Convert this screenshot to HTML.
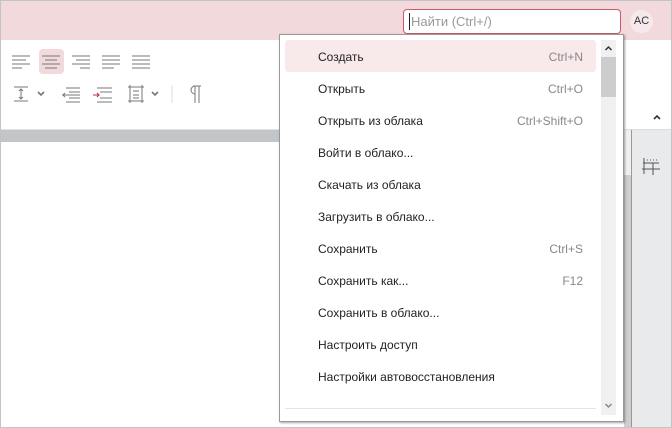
<!DOCTYPE html><html><head><meta charset="utf-8"><style>
*{box-sizing:border-box;margin:0;padding:0}
body{width:672px;height:428px;position:relative;overflow:hidden;background:#fff;font-family:"Liberation Sans","DejaVu Sans",sans-serif;font-size:12px;color:#222}
.a{position:absolute}
.win{position:absolute;left:0;top:0;width:672px;height:428px;border:1px solid #c4c4c4;pointer-events:none}
.row{position:absolute;left:285px;width:311px;height:32px;line-height:34px}
.row span{position:absolute;left:33px}
.row b{position:absolute;right:13px;font-weight:normal;color:#888}
</style></head><body>
<div class="a" style="left:0;top:0;width:672px;height:40px;background:#f2d9dc"></div>
<div class="a" style="left:403px;top:9px;width:218px;height:25px;border:1px solid #c95a66;border-radius:4px;background:#fff"></div>
<div class="a" style="left:409px;top:13px;width:1px;height:17px;background:#222"></div>
<div class="a" style="left:411px;top:14px;color:#999;font-size:13px">Найти (Ctrl+/)</div>
<div class="a" style="left:630px;top:10px;width:23px;height:23px;border-radius:50%;background:#f7e9eb;text-align:center;line-height:23px;font-size:11px;color:#333">AC</div>
<div class="a" style="left:39px;top:49px;width:25px;height:25px;background:#f2d9dc;border-radius:4px"></div>
<svg class="a" style="left:0;top:40px" width="280" height="90" stroke="#777" stroke-width="1" fill="none">
<path d="M12 16h18M12 20h14M12 24h18M12 28h10"/>
<path d="M42 16h18M45 20h12M42 24h18M45 28h12"/>
<path d="M72 16h18M76 20h14M72 24h18M80 28h10"/>
<path d="M102 16h18M102 20h18M102 24h18M102 28h12"/>
<path d="M132 16h18M132 20h18M132 24h18M132 28h18"/>
<path d="M14 47h14M14 61h14M21 49v10M19 51l2-2 2 2M19 57l2 2 2-2"/>
<path d="M38 52l3 3 3-3" stroke-width="1.6"/>
<path d="M66 48h14M69 52h11M62 55h18M69 58h11M66 62h14M65 53l-2 2 2 2"/>
<path d="M97 48h15M100 52h12M100 58h12M97 62h15"/><path d="M93 55h6M97 53l2 2-2 2" stroke="#c0283a"/>
<path d="M128 47h16M128 61h16M130 45v18M142 45v18M133 51h6M133 55h6M133 58h6"/>
<path d="M152 52l3 3 3-3" stroke-width="1.6"/>
<path d="M172 45v18" stroke="#ddd"/>
<path d="M193 46h8M195 46v17M199 46v17M195 46a4 4 0 0 0 0 8"/>
</svg>
<div class="a" style="left:0;top:129px;width:624px;height:13px;background:#c3c6c8;border-top:1px solid #e2e2e2"></div>
<svg class="a" style="left:652px;top:113px" width="10" height="8"><path d="M2 6l3-3 3 3" stroke="#333" stroke-width="1.6" fill="none"/></svg>
<div class="a" style="left:624px;top:129px;width:48px;height:1px;background:#ddd"></div>
<div class="a" style="left:624px;top:130px;width:7px;height:298px;background:#f0f0f0"></div>
<div class="a" style="left:624px;top:175px;width:7px;height:253px;background:#cfcfcf"></div>
<div class="a" style="left:631px;top:130px;width:1px;height:298px;background:#999"></div>
<div class="a" style="left:632px;top:130px;width:40px;height:298px;background:#e8eaec"></div>
<svg class="a" style="left:640px;top:155px" width="24" height="24" stroke="#555" fill="none"><path d="M4 3v16M3 8h16M2 14h18M13 8v12M7 5h1M10 5h1M13 5h1M16 5h1"/></svg>
<div class="a" style="left:279px;top:34px;width:345px;height:388px;background:#fff;border:1px solid #999;box-shadow:1px 1px 2px rgba(0,0,0,.35)"></div>
<div class="a" style="left:285px;top:40px;width:311px;height:32px;background:#f8e9eb;border-radius:3px"></div>
<div class="row" style="top:40px"><span>Создать</span><b>Ctrl+N</b></div>
<div class="row" style="top:72px"><span>Открыть</span><b>Ctrl+O</b></div>
<div class="row" style="top:104px"><span>Открыть из облака</span><b>Ctrl+Shift+O</b></div>
<div class="row" style="top:136px"><span>Войти в облако...</span></div>
<div class="row" style="top:168px"><span>Скачать из облака</span></div>
<div class="row" style="top:200px"><span>Загрузить в облако...</span></div>
<div class="row" style="top:232px"><span>Сохранить</span><b>Ctrl+S</b></div>
<div class="row" style="top:264px"><span>Сохранить как...</span><b>F12</b></div>
<div class="row" style="top:296px"><span>Сохранить в облако...</span></div>
<div class="row" style="top:328px"><span>Настроить доступ</span></div>
<div class="row" style="top:360px"><span>Настройки автовосстановления</span></div>
<div class="a" style="left:285px;top:408px;width:311px;height:1px;background:#e4e4e4"></div>
<div class="a" style="left:601px;top:40px;width:15px;height:375px;background:#f0f0f0"></div>
<div class="a" style="left:601px;top:57px;width:15px;height:40px;background:#cdcdcd"></div>
<svg class="a" style="left:604px;top:45px" width="9" height="7"><path d="M1.5 5l3-3 3 3" stroke="#333" stroke-width="1.5" fill="none"/></svg>
<svg class="a" style="left:604px;top:402px" width="9" height="7"><path d="M1.5 2l3 3 3-3" stroke="#888" stroke-width="1.5" fill="none"/></svg>
<div class="win"></div>
</body></html>
